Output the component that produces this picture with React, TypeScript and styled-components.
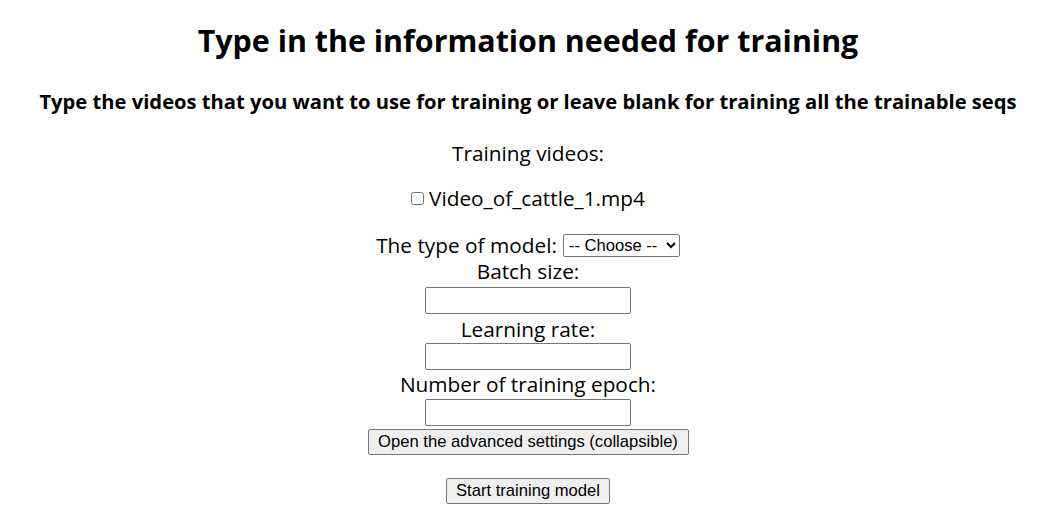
import React from "react";
import styled, { createGlobalStyle } from "styled-components";

const Global = createGlobalStyle`
  html, body { margin: 0; padding: 0; background: #fff; }
  body { font-family: "Open Sans", "Noto Sans", sans-serif; color: #000; }
`;

const Page = styled.form`
  display: flex;
  flex-direction: column;
  align-items: center;
  text-align: center;
  width: 1056px;
`;

const Title = styled.h1`
  margin: 21px 0 0;
  font-size: 30.4px;
  line-height: 40px;
  font-weight: 700;
`;

const Subtitle = styled.h3`
  margin: 27px 0 0;
  font-size: 20.2px;
  line-height: 26px;
  font-weight: 700;
  white-space: nowrap;
`;

const Label = styled.div<{ $mt: number }>`
  margin-top: ${(p) => p.$mt}px;
  font-size: 20.8px;
  line-height: 28px;
  white-space: nowrap;
`;

const Row = styled.label<{ $mt: number }>`
  display: flex;
  align-items: center;
  gap: 4px;
  margin-top: ${(p) => p.$mt}px;
  font-size: 20.8px;
  line-height: 28px;
  white-space: nowrap;
`;

const Check = styled.input`
  width: 13px;
  height: 13px;
  margin: 0 1px 0 0;
`;

const Select = styled.select`
  box-sizing: border-box;
  font-family: "Liberation Sans", Arial, sans-serif;
  font-size: 16.6px;
  width: 117px;
  height: 23px;
  padding: 0 0 0 1px;
  margin-left: 2px;
  border: 1px solid #767676;
  border-radius: 2px;
  background: #fff;
  color: #000;
`;

const TextInput = styled.input<{ $mt: number }>`
  box-sizing: border-box;
  width: 206px;
  height: 27px;
  margin: ${(p) => p.$mt}px 0 0;
  border: 1px solid #767676;
  border-radius: 2px;
  font-size: 16px;
`;

const Button = styled.button<{ $mt: number; $w: number }>`
  box-sizing: border-box;
  margin-top: ${(p) => p.$mt}px;
  width: ${(p) => p.$w}px;
  height: 26px;
  padding: 0;
  font-family: "Liberation Sans", Arial, sans-serif;
  font-size: 16.6px;
  color: #000;
  background: #efefef;
  border: 1px solid #767676;
  border-radius: 2px;
`;

export default function App() {
  return (
    <>
      <Global />
      <Page onSubmit={(e) => e.preventDefault()}>
        <Title>Type in the information needed for training</Title>
        <Subtitle>
          Type the videos that you want to use for training or leave blank for training all the trainable seqs
        </Subtitle>
        <Label $mt={25}>Training videos:</Label>
        <Row $mt={17}>
          <Check type="checkbox" />
          Video_of_cattle_1.mp4
        </Row>
        <Row $mt={19}>
          The type of model:
          <Select defaultValue="">
            <option value="">-- Choose --</option>
          </Select>
        </Row>
        <Label $mt={-2}>Batch size:</Label>
        <TextInput type="text" $mt={2} />
        <Label $mt={1}>Learning rate:</Label>
        <TextInput type="text" $mt={0} />
        <Label $mt={0}>Number of training epoch:</Label>
        <TextInput type="text" $mt={1} />
        <Button type="button" $mt={3} $w={321}>
          Open the advanced settings (collapsible)
        </Button>
        <Button type="submit" $mt={23} $w={164}>
          Start training model
        </Button>
      </Page>
    </>
  );
}
